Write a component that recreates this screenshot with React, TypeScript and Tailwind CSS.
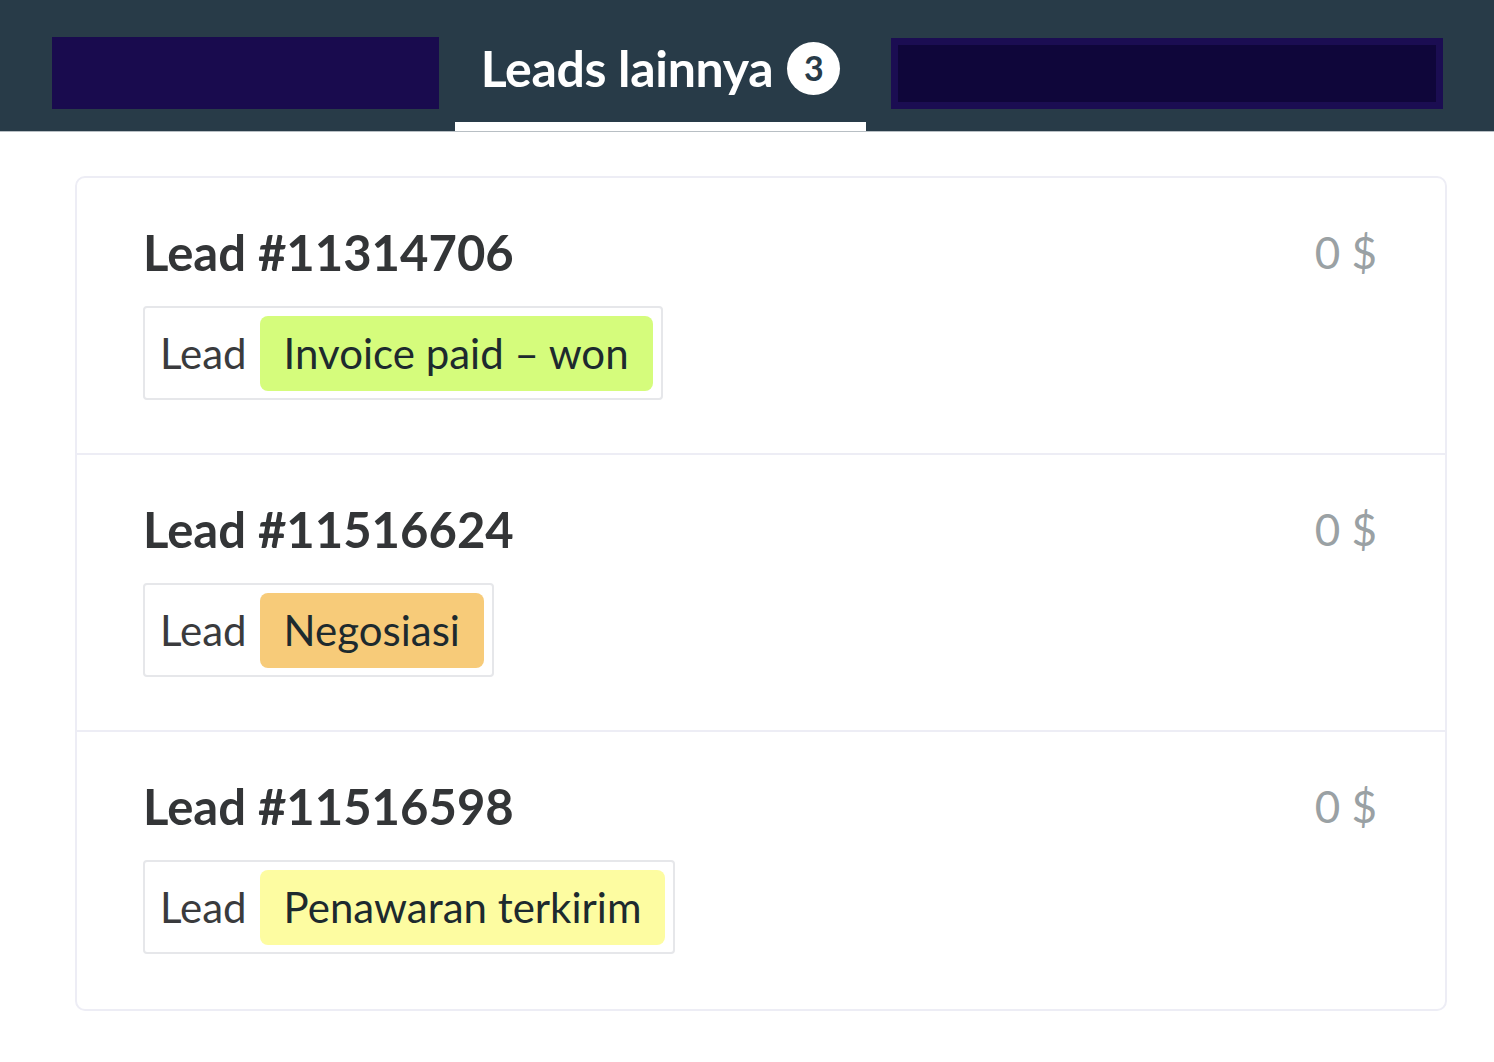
import React from "react";

const rows = [
  { id: "11314706", status: "Invoice paid – won", color: "bg-[#d5fc7c]" },
  { id: "11516624", status: "Negosiasi", color: "bg-[#f7cb79]" },
  { id: "11516598", status: "Penawaran terkirim", color: "bg-[#fdfca1]" },
];

export default function App() {
  return (
    <div
      className="w-[1494px] h-[1062px] bg-white overflow-hidden"
      style={{ fontFamily: "Lato, 'Open Sans', sans-serif" }}
    >
      <div className="h-[132px] bg-[#283b48] flex items-stretch pl-[52px] border-b border-[#b8bfc4]">
        <div className="self-start mt-[37px] w-[387px] h-[72px] bg-[#190b4e]" />
        <div className="ml-[16px] w-[411px] flex flex-col">
          <div className="flex-1 flex items-center justify-center gap-[14px] pt-[14px]">
            <span className="text-white font-bold text-[50px] leading-none tracking-[-0.3px]">
              Leads lainnya
            </span>
            <span className="w-[53px] h-[53px] rounded-full bg-white text-[#283b48] font-bold text-[34px] flex items-center justify-center leading-none">
              3
            </span>
          </div>
          <div className="h-[9px] bg-white" />
        </div>
        <div className="self-start ml-[25px] mt-[38px] w-[552px] h-[71px] border-[7px] border-[#1b0d52] bg-[#0f063a]" />
      </div>

      <div className="mt-[44px] ml-[75px] w-[1372px] border-2 border-[#ededf5] rounded-[10px]">
        {rows.map((r, i) => (
          <div
            key={r.id}
            className={`pl-[66px] pr-[68px] pt-[44px] flex justify-between ${
              i > 0 ? "border-t-2 border-[#ededf5]" : ""
            } ${i === 0 ? "h-[275px]" : i === 1 ? "h-[277px]" : "h-[279px]"}`}
          >
            <div className="flex flex-col items-start">
              <div className="text-[#333537] font-bold text-[49px] leading-[60px]">
                Lead #{r.id}
              </div>
              <div className="mt-[24px] h-[94px] border-2 border-[#e6e7ea] rounded-[4px] flex items-center pl-[15px] pr-[8px]">
                <span className="text-[#3a3b3d] text-[42px] leading-none">Lead</span>
                <span
                  className={`ml-[13px] h-[75px] px-[24px] rounded-[8px] flex items-center text-[#1d2a2e] text-[42px] leading-none ${r.color}`}
                >
                  {r.status}
                </span>
              </div>
            </div>
            <div className="text-[#9aa1a4] text-[44px] leading-[60px]">0 $</div>
          </div>
        ))}
      </div>
    </div>
  );
}
